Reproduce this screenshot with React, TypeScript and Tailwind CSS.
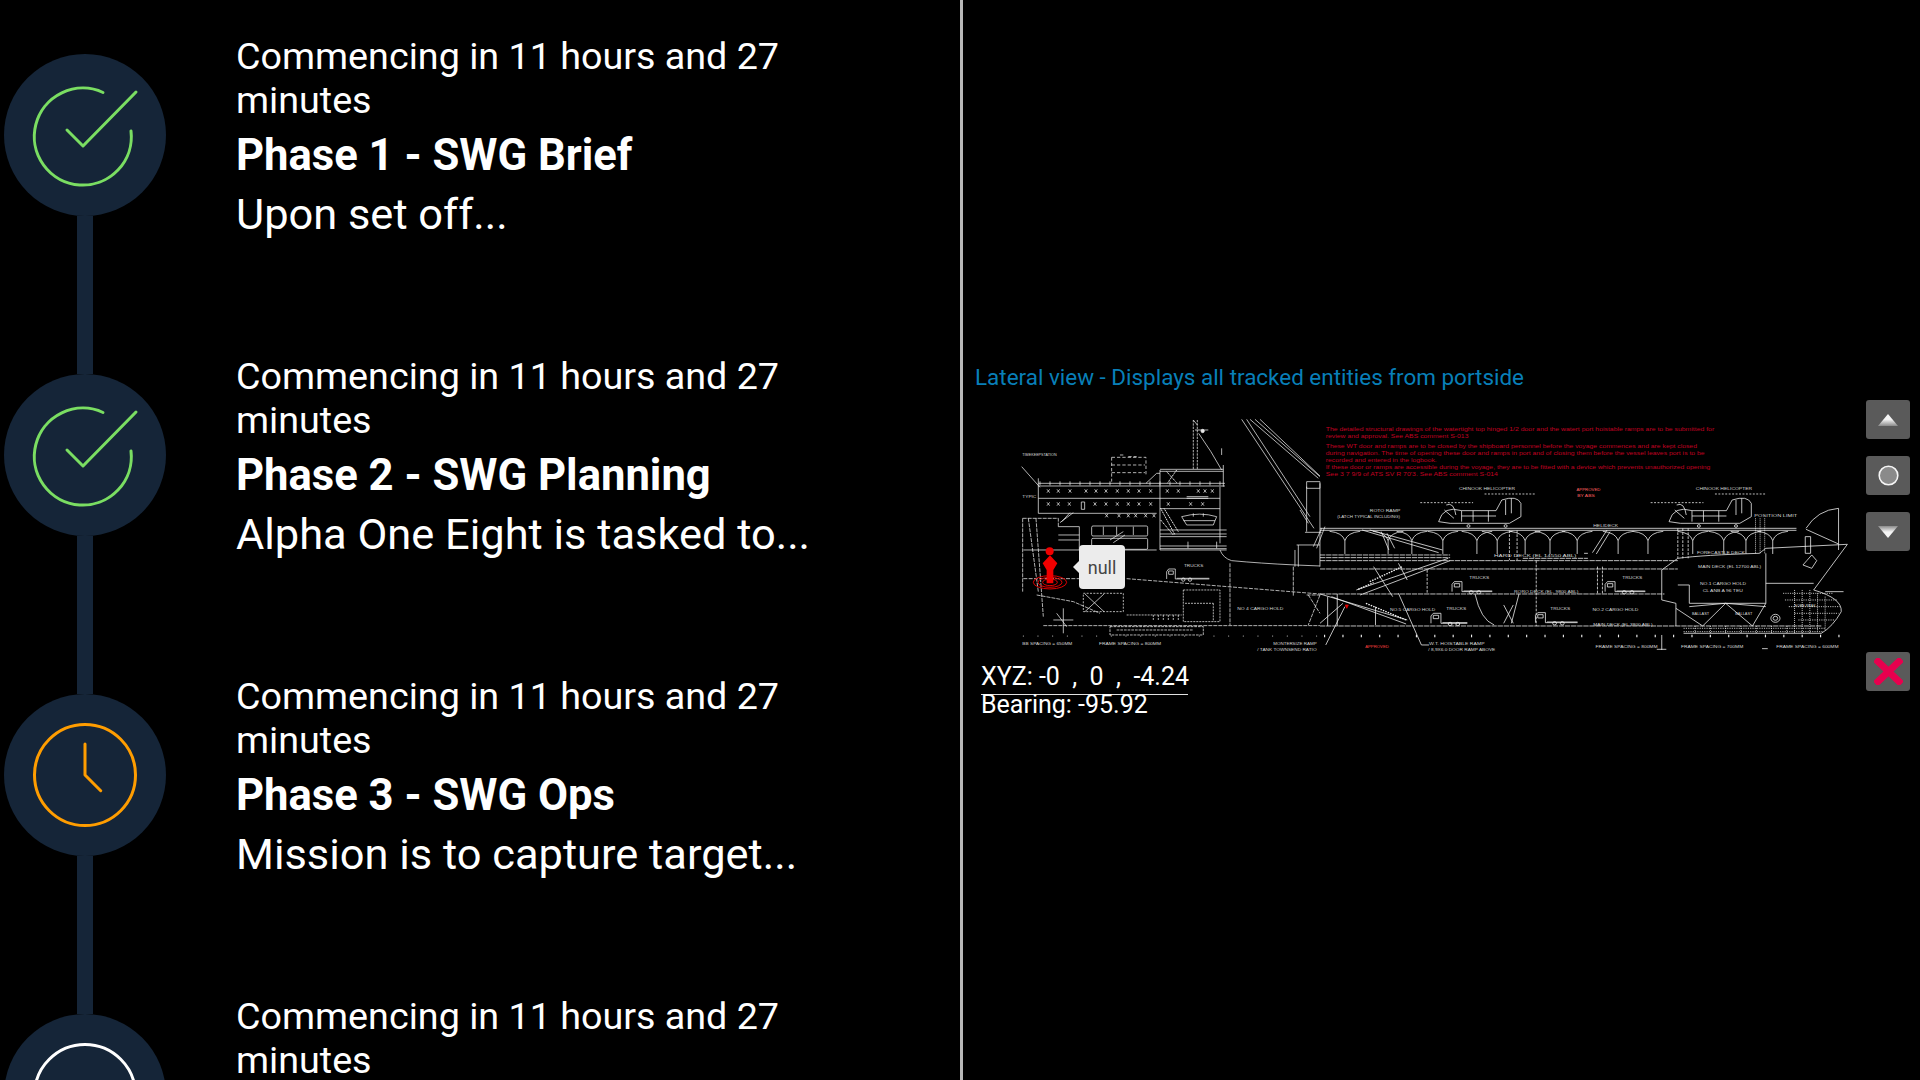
import React from "react";

function CircleNode({ children, last }: { children: React.ReactNode; last?: boolean }) {
  return (
    <div className="flex flex-col items-center w-[162px] h-[320px] shrink-0">
      <div className="w-[162px] h-[162px] shrink-0 rounded-full bg-[#152538]">{children}</div>
      {!last && <div className="w-[16px] flex-1 bg-[#152538]" />}
    </div>
  );
}

const CheckIcon = () => (
  <svg viewBox="0 0 162 162" className="w-[162px] h-[162px]" fill="none" stroke="#7ade62" strokeWidth="3" strokeLinecap="round" strokeLinejoin="round">
    <path d="M99 38.5 A48.5 48.5 0 1 0 127 77" />
    <path d="M63 76 L79 92 L132 38" />
  </svg>
);
const ClockIcon = () => (
  <svg viewBox="0 0 162 162" className="w-[162px] h-[162px]" fill="none" stroke="#ff9d00" strokeWidth="3" strokeLinecap="round" strokeLinejoin="round">
    <circle cx="81" cy="81" r="50.5" />
    <path d="M81 50 V81 L96.7 96.7" />
  </svg>
);
const RingIcon = () => (
  <svg viewBox="0 0 162 162" className="w-[162px] h-[162px]" fill="none" stroke="#ffffff" strokeWidth="3">
    <circle cx="81" cy="81" r="50.5" />
  </svg>
);

const phases = [
  { title: "Phase 1 - SWG Brief", desc: "Upon set off...", icon: <CheckIcon /> },
  { title: "Phase 2 - SWG Planning", desc: "Alpha One Eight is tasked to...", icon: <CheckIcon /> },
  { title: "Phase 3 - SWG Ops", desc: "Mission is to capture target...", icon: <ClockIcon /> },
  { title: "", desc: "", icon: <RingIcon /> },
];

function PhaseRow({ p, last }: { p: (typeof phases)[number]; last?: boolean }) {
  return (
    <div className="flex h-[320px] shrink-0">
      <CircleNode last={last}>{p.icon}</CircleNode>
      <div className="ml-[70px] -mt-[20px] text-white">
        <div className="w-[590px] text-[37.7px] leading-[44px]">Commencing in 11 hours and 27 minutes</div>
        {p.title && <div className="mt-[10px] text-[43.6px] leading-[48px] font-bold">{p.title}</div>}
        {p.desc && <div className="mt-[11px] text-[43.4px] leading-[48px]">{p.desc}</div>}
      </div>
    </div>
  );
}

const T = ({ x, y, w, c, s = 16, fill = "#d8d8d8" }: { x: number; y: number; w: number; c: string; s?: number; fill?: string }) => (
  <text x={x} y={y} textLength={w} lengthAdjust="spacingAndGlyphs" fontSize={s} fill={fill} stroke="none" fontFamily="Liberation Sans, sans-serif">{c}</text>
);

const windows1 = [265, 295, 330, 378, 408, 438, 472, 505, 537, 572, 622, 655, 715, 735, 757];
const windows2 = [265, 295, 328, 405, 438, 472, 505, 537, 572, 625, 692, 728];
const windows3 = [440, 477, 505, 527, 557, 582];
const ticksA = Array.from({ length: 21 }, (_, i) => 190 + i * 44);
const ticksB = Array.from({ length: 29 }, (_, i) => 12 + i * 48);
const rail = Array.from({ length: 19 }, (_, i) => 240 + i * 30);
const arches = [65, 178, 240, 321, 410, 463, 536, 601, 672, 779, 857, 974, 1055, 1113, 1183];

const Truck = ({ x, y, w = 105 }: { x: number; y: number; w?: number }) => (
  <g>
    <path d={`M${x} ${y + 30} V${y + 8} L${x + 6} ${y} H${x + 26} V${y + 30} H${x + w} M${x + 30} ${y + 28} H${x + w}`} />
    <circle cx={x + 50} cy={y + 32} r="5" />
    <circle cx={x + 70} cy={y + 32} r="5" />
    <path d={`M${x + 6} ${y + 6} H${x + 20} V${y + 16} H${x + 6} Z`} />
  </g>
);

const Heli = ({ x }: { x: number }) => (
  <g>
    <path d={`M${x} 395 Q${x + 12} 345 ${x + 60} 362 H${x + 150} L${x + 165} 330 Q${x + 205} 315 ${x + 215} 340 V380 L${x + 185} 400 H${x + 30} Z`} />
    <path d={`M${x - 48} 338 H${x + 90}`} strokeDasharray="5 4" />
    <path d={`M${x + 120} 312 H${x + 255}`} strokeDasharray="5 4" />
    <path d={`M${x + 60} 362 V395 M${x + 90} 362 V395 M${x + 130} 362 V395 M${x + 60} 378 H${x + 150} M${x + 175} 330 V375 M${x + 190} 325 V370`} />
    <path d={`M${x + 20} 345 Q${x + 40} 335 ${x + 45} 375 M${x + 15} 360 L${x + 40} 385`} />
    <circle cx={x + 78} cy="408" r="4" />
    <circle cx={x + 175} cy="408" r="4" />
  </g>
);

function ShipDrawing() {
  return (
    <svg viewBox="1020 415 830 240" className="block w-[830px] h-[240px]" fill="none" stroke="#f0f0f0" strokeWidth="0.7">
      {/* aft + midship */}
      <g transform="translate(960 350) scale(0.3333)" strokeWidth="2.2">
        <T x={187} y={318} w={103} c="TIMEKEEPSTATION" s={12} />
        <T x={187} y={444} w={42} c="TYPIC" s={13} />
        <path d="M185 350 L240 412" />
        <path d="M235 400 H795 M235 408 H795 M600 358 H790 M600 364 H790 M235 445 H780 M235 490 H590 M600 476 H780" />
        <path d="M235 385 V490 M600 360 V600 M790 345 V410 M780 410 V580" />
        <path d="M558 400 L590 370 H600" />
        {rail.map((x) => <path key={x} d={`M${x} 394 V406`} />)}
        <path d="M455 322 H558 V375 M455 345 H555 M455 368 H555 M455 322 V395 M480 315 H495 M505 320 H530" strokeDasharray="10 6" />
        <path d="M700 210 V360 M712 210 V360" strokeDasharray="7 3" />
        <path d="M716 250 Q755 305 785 360 M705 240 H745 M785 295 V315 M700 210 L712 225" />
        <circle cx="728" cy="243" r="5" fill="#e6e6e6" />
        {windows1.map((x) => <path key={x} d={`M${x - 4} 418 L${x + 4} 428 M${x + 4} 418 L${x - 4} 428`} />)}
        {windows2.map((x) => <path key={x} d={`M${x - 4} 457 L${x + 4} 467 M${x + 4} 457 L${x - 4} 467`} />)}
        {windows3.map((x) => <path key={x} d={`M${x - 4} 492 L${x + 4} 502 M${x + 4} 492 L${x - 4} 502`} />)}
        <path d="M364 456 H374 V478 H364 Z M680 445 H745 M680 440 H745 M600 600 H800" />
        <path d="M188 505 H295 V530 M188 505 V725 M205 505 L235 725 M228 505 L250 800" strokeDasharray="12 3" />
        <path d="M295 530 H358 V600 M295 555 H358 M295 570 H358 M340 488 L300 518 M330 488 L305 515" />
        <rect x="395" y="528" width="168" height="30" rx="4" />
        <rect x="395" y="565" width="168" height="33" rx="4" />
        <path d="M600 540 H800 M600 552 H800 M600 560 H800 M600 588 H800 M600 596 H800 M190 600 H590" />
        <path d="M430 530 V555 M470 530 V555 M520 530 V555 M450 570 L490 545 M460 578 L495 555 M684 575 V595 M770 575 V595" />
        <path d="M602 475 L645 555 M612 475 L655 545 M602 510 L640 555 M620 365 L650 398 M650 360 L622 400" strokeDasharray="4 2" strokeWidth="3" />
        <path d="M665 500 Q720 485 770 500 L760 525 H680 Z M670 512 H765 M700 490 V500 M730 490 V500" />
        <path d="M780 600 Q790 625 815 632 Q900 640 1005 645 L1080 648" />
        <path d="M1005 600 V650 M1015 585 V650 M1080 400 V650 M1040 410 V545 M1010 585 H1080 M1085 535 L1060 590 M1095 530 L1070 595 M1035 547 H1085" />
        <path d="M190 686 H360 M500 686 L1080 732" strokeDasharray="12 4" />
        <path d="M230 735 L340 755 L420 790 M250 827 H1080 M810 640 V825 M1000 650 V740 M1040 735 H1080 M1045 735 L1080 790 M1080 735 L1045 825" strokeDasharray="12 3" />
        <path d="M370 730 H490 V785 H370 Z" strokeDasharray="6 4" />
        <path d="M375 732 L432 785 M432 732 L375 785" />
        <path d="M500 795 H665 M580 795 V810 M595 795 V810 M610 795 V810 M625 795 V810 M640 795 V810 M655 795 V810 M670 720 H780 V815 H670 Z M675 760 H760 M760 760 V815" strokeDasharray="6 3" />
        <path d="M450 830 H730 V855 H450 Z M470 840 H700" strokeDasharray="8 3" />
        <path d="M290 790 L320 830 M310 775 V850 M280 810 H340" />
        <Truck x={620} y={657} w={128} />
        <T x={672} y={652} w={58} c="TRUCKS" s={12} />
        <T x={832} y={781} w={138} c="NO 4 CARGO HOLD" s={13} />
        {ticksA.map((x) => <circle key={x} cx={x} cy="858" r="1.6" fill="#e6e6e6" stroke="none" />)}
        <T x={187} y={886} w={150} c="BB SPACING = 650MM" s={12} />
        <T x={417} y={886} w={186} c="FRAME SPACING = 800MM" s={12} />
        <T x={940} y={886} w={130} c="MONTERSIZE RAMP" s={12} />
        <T x={892} y={902} w={178} c="/ TANK TOWNSEND RATIO" s={12} />
        <path d="M845 208 L1062 535 M860 208 L1050 500 M870 208 L1075 385 M885 208 L1080 380 M900 208 L1080 378" />
        <path d="M1040 395 H1080 V415 H1040 Z M1020 480 L1045 520" />
      </g>

      {/* forward part */}
      <g transform="translate(1320 390) scale(0.3827 0.3333)" strokeWidth="2.2">
        <T x={15} y={122} w={1015} c="The detailed structural drawings of the watertight top hinged 1/2 door and the watert port hoistable ramps are to be submitted for" s={18} fill="#c00022" />
        <T x={15} y={143} w={373} c="review and approval. See ABS comment S-013" s={18} fill="#c00022" />
        <T x={15} y={174} w={970} c="These WT door and ramps are to be closed by the shipboard personnel before the voyage commences and are kept closed" s={18} fill="#c00022" />
        <T x={15} y={195} w={990} c="during navigation. The time of opening these door and ramps in port and of closing them before the vessel leaves port is to be" s={18} fill="#c00022" />
        <T x={15} y={216} w={290} c="recorded and entered in the logbook." s={18} fill="#c00022" />
        <T x={15} y={237} w={1005} c="If these door or ramps are accessible during the voyage, they are to be fitted with a device which prevents unauthorized opening" s={18} fill="#c00022" />
        <T x={15} y={258} w={450} c="See 3 7 9/9 of ATS SV R 70'3. See ABS comment S-014" s={18} fill="#c00022" />
        <T x={363} y={300} w={147} c="CHINOOK HELICOPTER" s={13} />
        <T x={982} y={300} w={147} c="CHINOOK HELICOPTER" s={13} />
        <T x={670} y={304} w={63} c="APPROVED" s={12} fill="#ff6060" />
        <T x={672} y={320} w={46} c="BY ABS" s={12} fill="#ff6060" />
        <T x={130} y={367} w={80} c="ROTO RAMP" s={12} />
        <T x={45} y={384} w={164} c="(LATCH TYPICAL INCLUDING)" s={12} />
        <T x={1135} y={380} w={112} c="POSITION LIMIT" s={12} />
        <T x={714} y={410} w={65} c="HELIDECK" s={12} />
        <Heli x={310} />
        <Heli x={912} />
        <path d="M0 415 H1245 M0 421 H1245" />
        {arches.map((x) => (
          <path key={x} d={`M${x - 40} 424 Q${x - 6} 428 ${x} 452 Q${x + 6} 428 ${x + 40} 424 M${x} 452 V492`} />
        ))}
        <path d="M0 495 H340 M0 503 H340 M0 512 H935 M530 505 H700 M0 537 H935 M0 612 H900 M0 708 H1310" strokeDasharray="14 2" />
        <T x={455} y={502} w={215} c="HARD DECK (EL 14550 ABL)" s={13} />
        <path d="M690 490 H700 M712 488 L750 420 M722 492 L758 425" />
        <path d="M110 420 L310 488 M130 420 L320 480 M160 425 L180 480 M175 430 L195 475" />
        <path d="M95 600 L335 505 M105 615 L340 512 M140 530 L190 620 M205 520 L228 570" />
        <path d="M130 575 L215 530 M100 598 L140 578" strokeWidth="4" strokeDasharray="4 3" />
        <path d="M0 612 L228 690 M30 620 L225 702 M0 700 L60 640" />
        <path d="M120 640 L225 690" strokeWidth="4" strokeDasharray="4 3" />
        <path d="M205 610 L265 765 H285 M15 765 L65 650 M145 650 V705 M45 612 V708 M20 620 V708" />
        <path d="M66 645 L74 645 L70 655 Z" fill="#e00000" stroke="#e00000" />
        <T x={183} y={662} w={118} c="NO.5 CARGO HOLD" s={13} />
        <T x={390} y={566} w={52} c="TRUCKS" s={13} />
        <T x={790} y={566} w={52} c="TRUCKS" s={13} />
        <T x={330} y={660} w={52} c="TRUCKS" s={13} />
        <T x={602} y={660} w={52} c="TRUCKS" s={13} />
        <T x={507} y={608} w={168} c="RORO DECK (EL. 9800 ABL)" s={13} />
        <T x={712} y={662} w={120} c="NO.2 CARGO HOLD" s={13} />
        <T x={714} y={707} w={155} c="MAIN DECK (EL 3800 ABL)" s={12} />
        <Truck x={345} y={575} />
        <Truck x={745} y={575} />
        <Truck x={290} y={670} w={95} />
        <Truck x={563} y={668} w={110} />
        <path d="M565 512 V708 M725 530 V612 M738 530 V612 M280 540 V612 M495 421 V510 M515 421 V510 M935 415 V505 M948 415 V505 M962 415 V505" strokeDasharray="8 4" />
        <path d="M405 612 Q420 690 455 705 M520 612 L500 700 M480 645 L505 700 M505 645 L480 700" />
        <path d="M935 505 Q1000 495 1148 490 L1165 475 L1378 463 L1290 600 Q1365 625 1362 665 Q1340 710 1310 730 H950" />
        <path d="M935 505 L893 540 V630 L930 640 V708 M935 585 H965 V640 H1165 V490 M1165 580 H1290" />
        <path d="M930 655 L1000 708 L1060 640 L1130 708 L1165 640 M965 650 L1060 640 L1165 650" />
        <T x={985} y={493} w={125} c="FORECASTLE DECK" s={13} />
        <T x={988} y={535} w={165} c="MAIN DECK (EL 12700 ABL)" s={13} />
        <T x={993} y={585} w={120} c="NO.1 CARGO HOLD" s={13} />
        <T x={1000} y={605} w={105} c="CL ANB A 96 TEU" s={13} />
        <T x={972} y={675} w={45} c="BALLAST" s={10} />
        <T x={1085} y={675} w={45} c="BALLAST" s={10} />
        <T x={1240} y={651} w={55} c="FORE PEAK" s={10} />
        <path d="M1210 610 H1340 M1215 630 H1350 M1225 650 H1358 M1240 670 H1355 M1250 690 H1345 M950 715 H1320 M950 725 H1315" strokeDasharray="3 3" />
        <path d="M1240 600 V730 M1260 600 V730 M1280 600 V730 M1300 610 V725 M1320 620 V720 M980 708 V730 M1020 708 V730 M1060 708 V730 M1100 708 V730 M1140 708 V730 M1180 708 V730 M1220 708 V730" strokeDasharray="3 3" />
        <circle cx="1190" cy="685" r="12" />
        <circle cx="1190" cy="685" r="6" />
        <path d="M1355 355 V480 M1270 415 Q1300 360 1355 355 M1270 418 L1355 462 M1268 440 H1282 V490 H1268 Z M1272 512 L1285 495 L1298 512 L1285 535 L1262 525 Z" />
        <path d="M1138 385 V490 M1150 385 V490 M1162 385 V490" strokeDasharray="3 3" />
        {ticksB.map((x) => <path key={x} d={`M${x} 734 V742`} strokeWidth="3" />)}
        <T x={118} y={775} w={62} c="APPROVED" s={12} fill="#ff4040" />
        <T x={285} y={765} w={145} c="W.T. HOISTABLE RAMP" s={12} />
        <T x={283} y={782} w={175} c="/ 8,9X6.0 DOOR RAMP ABOVE" s={12} />
        <T x={720} y={774} w={162} c="FRAME SPACING = 800MM" s={12} />
        <T x={943} y={774} w={163} c="FRAME SPACING = 700MM" s={12} />
        <T x={1192} y={774} w={163} c="FRAME SPACING = 600MM" s={12} />
        <path d="M893 735 V780 M880 778 H905 M1155 776 H1170 M1320 605 H1368" />
      </g>

      {/* tracked person */}
      <g transform="translate(960 350) scale(0.3333)" stroke="none">
        <ellipse cx="270" cy="697" rx="50" ry="20" fill="none" stroke="#e00000" strokeWidth="3" />
        <ellipse cx="270" cy="697" rx="36" ry="15" fill="none" stroke="#e00000" strokeWidth="3" />
        <ellipse cx="270" cy="697" rx="22" ry="10" fill="none" stroke="#e00000" strokeWidth="3" />
        <circle cx="269" cy="604" r="12" fill="#f00000" />
        <path d="M270 616 L292 640 L280 660 V700 H260 V660 L248 640 Z" fill="#f00000" />
      </g>
    </svg>
  );
}

const btn = "w-[44px] h-[39px] flex items-center justify-center rounded-[3px] bg-[#5a5a5a]";

function Toolbar() {
  return (
    <div className="flex flex-col mt-[9px] mr-[10px] w-[44px]">
      <div className="flex flex-col gap-[17px]">
        <button className={btn}>
          <svg width="20" height="12" viewBox="0 0 20 12">
            <defs>
              <linearGradient id="up" x1="0" y1="0" x2="0" y2="1">
                <stop offset="0.45" stopColor="#f5f5f5" />
                <stop offset="1" stopColor="#8a8a8a" />
              </linearGradient>
            </defs>
            <path d="M10 0 L20 12 H0 Z" fill="url(#up)" />
          </svg>
        </button>
        <button className={btn}>
          <svg width="21" height="21" viewBox="0 0 21 21"><circle cx="10.5" cy="10.5" r="9.3" fill="#8a8a8a" stroke="#f5f5f5" strokeWidth="1.6" /></svg>
        </button>
        <button className={btn}>
          <svg width="20" height="12" viewBox="0 0 20 12">
            <defs>
              <linearGradient id="down" x1="0" y1="0" x2="0" y2="1">
                <stop offset="0" stopColor="#8a8a8a" />
                <stop offset="0.5" stopColor="#f5f5f5" />
              </linearGradient>
            </defs>
            <path d="M0 0 H20 L10 12 Z" fill="url(#down)" />
          </svg>
        </button>
      </div>
      <button className={`${btn} mt-[101px]`}>
        <svg width="29" height="27" viewBox="0 0 29 27"><path d="M4 3.5 L25 23.5 M25 3.5 L4 23.5" stroke="#e8004e" strokeWidth="7" strokeLinecap="square" fill="none" /></svg>
      </button>
    </div>
  );
}

export default function App() {
  return (
    <div className="flex w-full h-screen overflow-hidden bg-black text-white font-['Roboto',sans-serif]">
      <div className="w-[963px] h-full shrink-0 border-r-[3px] border-[#b8b8b8] overflow-hidden pl-[4px] pt-[54px] flex flex-col">
        {phases.map((p, i) => (
          <PhaseRow key={i} p={p} last={i === phases.length - 1} />
        ))}
      </div>
      <div className="flex-1 pl-[12px] pt-[363px] flex flex-col min-w-0">
        <div className="text-[22.45px] leading-[28px] text-[#087fb8]">Lateral view - Displays all tracked entities from portside</div>
        <div className="flex justify-between">
          <div className="flex flex-col">
            <div className="relative mt-[24px] ml-[45px]">
              <ShipDrawing />
              <div className="absolute left-[59px] top-[130px] w-[46px] h-[44px] flex items-center justify-center rounded-[4px] bg-[#ececec] text-[#444] text-[18px]">
                <span className="absolute -left-[6px] top-[16px] w-0 h-0 border-y-[6px] border-y-transparent border-r-[6px] border-r-[#ececec]" />
                null
              </div>
            </div>
            <div className="w-[207px] ml-[6px] mt-[8px] text-[25px] leading-[28px]">
              <div className="h-[32px] border-b border-[#e0e0e0] whitespace-pre">XYZ: -0  ,  0  ,  -4.24</div>
              <div className="-mt-[4px]">Bearing: -95.92</div>
            </div>
          </div>
          <Toolbar />
        </div>
      </div>
    </div>
  );
}
